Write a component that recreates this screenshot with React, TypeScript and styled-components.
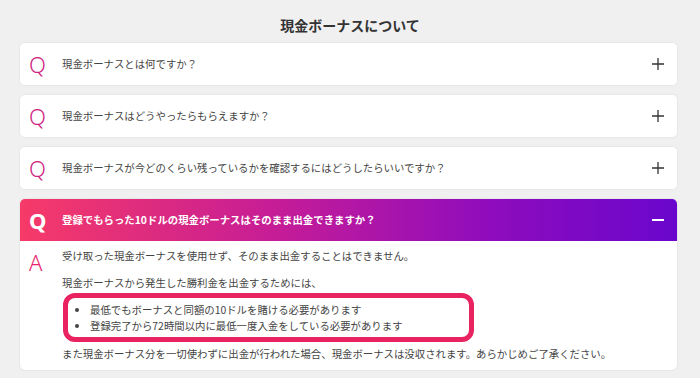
import React, { FunctionComponent, useState } from 'react';
import styled, { createGlobalStyle } from 'styled-components';

const GlobalStyle = createGlobalStyle`
  html, body {
    margin: 0;
    padding: 0;
    background: #f0f0f0;
    font-family: 'Noto Sans CJK JP', 'Noto Sans', sans-serif;
    color: #444;
  }
`;

const S = {
  Page: styled.div`
    padding: 0 23px 0 20px;
  `,
  Title: styled.h2`
    margin: 0;
    padding: 15px 0 8px 3px;
    text-align: center;
    font-size: 14px;
    line-height: 20px;
    font-weight: 700;
    color: #333;
  `,
  List: styled.div`
    display: flex;
    flex-direction: column;
    gap: 10px;
  `,
  Card: styled.div`
    background: #fff;
    border-radius: 5px;
    box-shadow: 0 0 2px rgba(0, 0, 0, 0.12);
    overflow: hidden;
  `,
  Header: styled.div<{ $open: boolean }>`
    display: flex;
    align-items: center;
    height: 42px;
    padding: 0 13px 0 0;
    cursor: pointer;
    background: ${(p) =>
      p.$open ? 'linear-gradient(90deg, #f63a68 0%, #c41c98 40%, #8e0cbd 72%, #6a06cc 100%)' : '#fff'};
    color: ${(p) => (p.$open ? '#fff' : '#444')};
    font-weight: ${(p) => (p.$open ? 700 : 400)};
  `,
  Mark: styled.span<{ $open?: boolean }>`
    width: 33px;
    padding-left: 9px;
    flex: none;
    font-family: 'Noto Sans', 'Open Sans', sans-serif;
    font-size: 22px;
    line-height: 24px;
    font-weight: ${(p) => (p.$open ? 700 : 300)};
    color: ${(p) => (p.$open ? '#fff' : '#d0237f')};
  `,
  Question: styled.span`
    flex: 1;
    font-size: 10.4px;
    line-height: 16px;
  `,
  Toggle: styled.svg`
    flex: none;
    width: 12px;
    height: 12px;
  `,
  Body: styled.div`
    display: flex;
    padding: 6px 20px 7px 0;
  `,
  AnswerMark: styled.span`
    width: 33px;
    padding-left: 9px;
    flex: none;
    font-family: 'Noto Sans', 'Open Sans', sans-serif;
    font-size: 22px;
    line-height: 30px;
    font-weight: 300;
    color: #e8246e;
  `,
  Answer: styled.div`
    flex: 1;
    font-size: 10.4px;
    line-height: 18px;
    color: #444;
  `,
  Para: styled.p<{ $gap?: number }>`
    margin: 0 0 ${(p) => p.$gap ?? 9}px;
  `,
  Highlight: styled.ul`
    box-sizing: border-box;
    width: 411px;
    margin: 0 0 3px 1px;
    padding: 4px 0 3px 22px;
    border: 5px solid #e8235f;
    border-radius: 12px;
    line-height: 16px;
    li::marker {
      font-size: 10px;
    }
  `,
};

interface FaqItem {
  q: string;
}

const items: FaqItem[] = [
  { q: '現金ボーナスとは何ですか？' },
  { q: '現金ボーナスはどうやったらもらえますか？' },
  { q: '現金ボーナスが今どのくらい残っているかを確認するにはどうしたらいいですか？' },
  { q: '登録でもらった10ドルの現金ボーナスはそのまま出金できますか？' },
  { q: '現金ボーナスの有効期限はありますか？' },
];

const ToggleIcon: FunctionComponent<{ open: boolean }> = ({ open }) => (
  <S.Toggle viewBox="0 0 12 12">
    {open ? (
      <line x1="0" y1="6" x2="12" y2="6" stroke="#fff" strokeWidth="2" />
    ) : (
      <>
        <line x1="0" y1="6" x2="12" y2="6" stroke="#333" strokeWidth="1.3" />
        <line x1="6" y1="0" x2="6" y2="12" stroke="#333" strokeWidth="1.3" />
      </>
    )}
  </S.Toggle>
);

const App: FunctionComponent = () => {
  const [openIndex, setOpenIndex] = useState<number>(3);

  return (
    <>
      <GlobalStyle />
      <S.Page>
        <S.Title>現金ボーナスについて</S.Title>
        <S.List>
          {items.map((item, i) => {
            const open = i === openIndex;
            return (
              <S.Card key={i}>
                <S.Header $open={open} onClick={() => setOpenIndex(open ? -1 : i)}>
                  <S.Mark $open={open}>Q</S.Mark>
                  <S.Question>{item.q}</S.Question>
                  <ToggleIcon open={open} />
                </S.Header>
                {open && (
                  <S.Body>
                    <S.AnswerMark>A</S.AnswerMark>
                    <S.Answer>
                      <S.Para>受け取った現金ボーナスを使用せず、そのまま出金することはできません。</S.Para>
                      <S.Para $gap={1}>現金ボーナスから発生した勝利金を出金するためには、</S.Para>
                      <S.Highlight>
                        <li>最低でもボーナスと同額の10ドルを賭ける必要があります</li>
                        <li>登録完了から72時間以内に最低一度入金をしている必要があります</li>
                      </S.Highlight>
                      <S.Para $gap={0}>
                        また現金ボーナス分を一切使わずに出金が行われた場合、現金ボーナスは没収されます。あらかじめご了承ください。
                      </S.Para>
                    </S.Answer>
                  </S.Body>
                )}
              </S.Card>
            );
          })}
        </S.List>
      </S.Page>
    </>
  );
};

export default App;
